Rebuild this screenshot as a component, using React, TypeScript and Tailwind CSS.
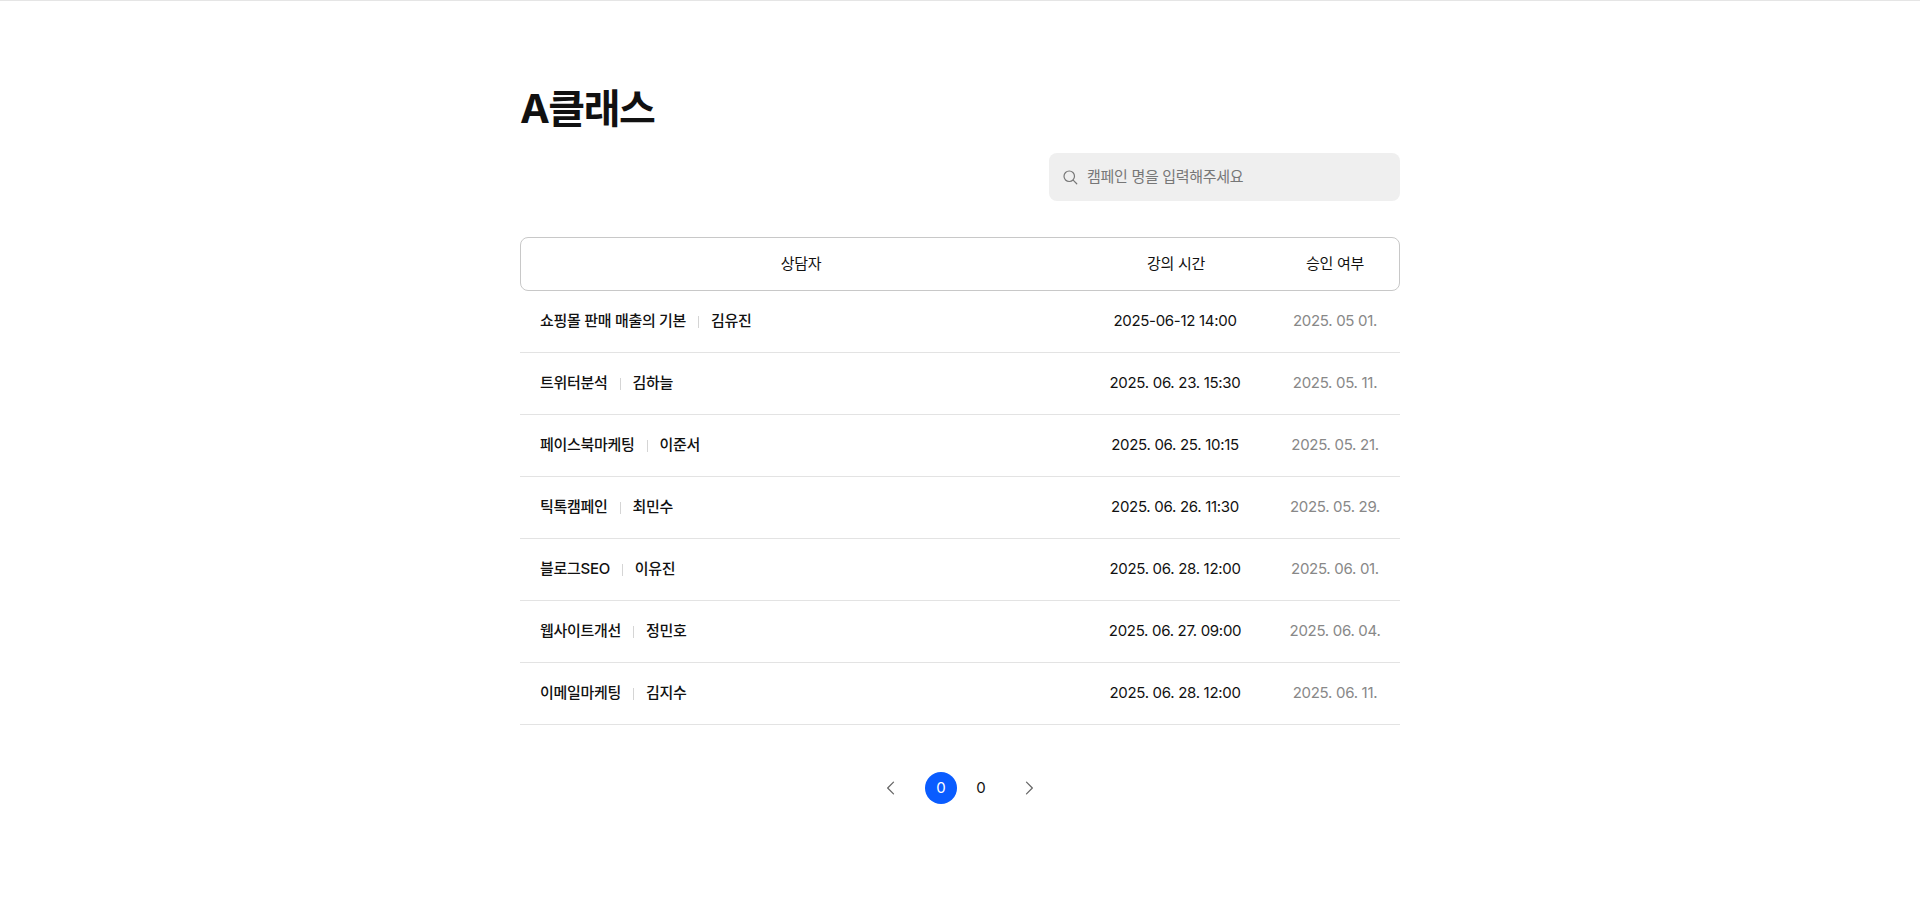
import React from "react";

const rows = [
  ["쇼핑몰 판매 매출의 기본", "김유진", "2025-06-12 14:00", "2025. 05 01."],
  ["트위터분석", "김하늘", "2025. 06. 23. 15:30", "2025. 05. 11."],
  ["페이스북마케팅", "이준서", "2025. 06. 25. 10:15", "2025. 05. 21."],
  ["틱톡캠페인", "최민수", "2025. 06. 26. 11:30", "2025. 05. 29."],
  ["블로그SEO", "이유진", "2025. 06. 28. 12:00", "2025. 06. 01."],
  ["웹사이트개선", "정민호", "2025. 06. 27. 09:00", "2025. 06. 04."],
  ["이메일마케팅", "김지수", "2025. 06. 28. 12:00", "2025. 06. 11."],
];

export default function App() {
  return (
    <div
      className="min-h-[905px] bg-white border-t border-[#e5e5e5] text-[#111]"
      style={{ fontFamily: "Inter, 'Noto Sans CJK KR', sans-serif" }}
    >
      <div className="w-[880px] mx-auto pt-[82px]">
        <h1 className="text-[40px] font-bold tracking-[-1.5px] leading-[52px]">A클래스</h1>
        <div className="flex justify-end mt-[18px]">
          <div className="w-[351px] h-[48px] bg-[#efefef] rounded-lg flex items-center px-[12px] gap-[8px]">
            <svg width="18" height="18" viewBox="0 0 24 24" fill="none" stroke="#777" strokeWidth="1.6" strokeLinecap="round">
              <circle cx="11" cy="11" r="7" />
              <path d="M16.5 16.5L21 21" />
            </svg>
            <span className="text-[15px] text-[#777] tracking-[-0.3px]">캠페인 명을 입력해주세요</span>
          </div>
        </div>
        <div className="mt-[36px] h-[54px] border border-[#c8c8c8] rounded-lg flex items-center text-[15px] tracking-[-0.3px]">
          <div className="w-[560px] text-center">상담자</div>
          <div className="w-[190px] text-center">강의 시간</div>
          <div className="flex-1 text-center">승인 여부</div>
        </div>
        {rows.map((r, i) => (
          <div key={i} className="h-[62px] border-b border-[#e3e3e3] flex items-center text-[15px] tracking-[-0.3px]">
            <div className="w-[560px] pl-[20px] flex items-center font-medium">
              <span>{r[0]}</span>
              <span className="mx-[12px] w-px h-[12px] bg-[#d5d5d5]" />
              <span>{r[1]}</span>
            </div>
            <div className="w-[190px] text-center">{r[2]}</div>
            <div className="flex-1 text-center text-[#888]">{r[3]}</div>
          </div>
        ))}
        <div className="flex justify-center items-center mt-[47px] text-[15px]">
          <svg width="20" height="20" viewBox="0 0 24 24" fill="none" stroke="#666" strokeWidth="1.5" strokeLinecap="round" strokeLinejoin="round">
            <path d="M15 5l-7 7 7 7" />
          </svg>
          <div className="ml-[24px] w-[32px] h-[32px] rounded-full bg-[#0a5cff] text-white flex items-center justify-center">0</div>
          <div className="ml-[8px] w-[32px] h-[32px] flex items-center justify-center">0</div>
          <svg className="ml-[22px]" width="20" height="20" viewBox="0 0 24 24" fill="none" stroke="#666" strokeWidth="1.5" strokeLinecap="round" strokeLinejoin="round">
            <path d="M9 5l7 7-7 7" />
          </svg>
        </div>
      </div>
    </div>
  );
}
